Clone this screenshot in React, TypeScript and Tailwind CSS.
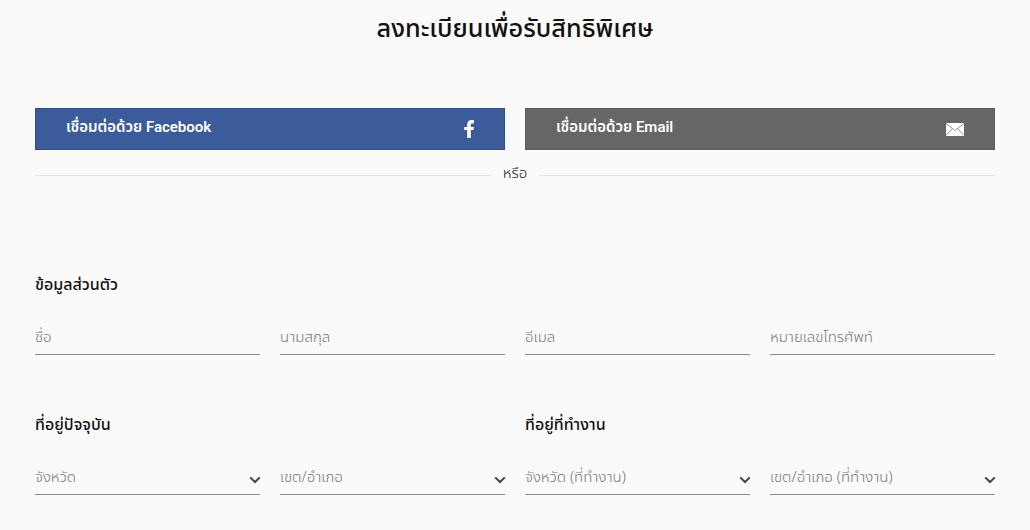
const FONT = "font-['Roboto','Noto_Sans_Thai','Noto_Sans','Liberation_Sans',sans-serif]"
const THAI = "font-['Noto_Sans_Thai','Noto_Sans','Liberation_Sans',sans-serif]"

function TextField({ label }: { label: string }) {
  return (
    <div className={`flex h-[35px] items-center border-b border-[#8a8a8a] pt-[3px] pb-[1px] text-[15px] font-light text-[#777777] ${THAI}`}>
      {label}
    </div>
  )
}

function Chevron() {
  return (
    <svg width="12" height="8" viewBox="0 0 12 8" className="mt-[3px] mr-[-1px]">
      <path d="M1.200 1.400 L6 6 L10.800 1.400" fill="none" stroke="#444444" strokeWidth="2" />
    </svg>
  )
}

function SelectField({ label }: { label: string }) {
  return (
    <div className={`flex h-[35px] items-center justify-between border-b border-[#8a8a8a] pt-[3px] pb-[1px] text-[15px] font-light text-[#777777] ${THAI}`}>
      <span>{label}</span>
      <Chevron />
    </div>
  )
}

function MailIcon() {
  return (
    <svg width="18" height="13" viewBox="0 0 18 13">
      <rect width="18" height="13" fill="#ffffff" />
      <path d="M0 0.500 L9 7.500 L18 0.500 M0 12.500 L6.500 5.500 M18 12.500 L11.500 5.500" fill="none" stroke="#777777" strokeWidth="0.8" />
    </svg>
  )
}

function FacebookIcon() {
  return (
    <svg width="10" height="18" viewBox="0 0 10 18">
      <path d="M6.800 18V10h2.700l.4-3.100H6.800V5c0-.9.3-1.500 1.500-1.500H10V.2C9.600.2 8.500 0 7.400 0 4.900 0 3.200 1.600 3.200 4.400v2.500H.2V10h3v8z" fill="#ffffff" />
    </svg>
  )
}

export default function App() {
  return (
    <div className={`h-[530px] w-[1030px] overflow-hidden bg-[#fafafa] px-[35px] text-[#111111] ${FONT}`}>
      <h1 className={`flex h-[60px] items-center justify-center text-[25.3px] font-medium ${THAI}`}>
        ลงทะเบียนเพื่อรับสิทธิพิเศษ
      </h1>

      <div className="mt-[48px] grid grid-cols-2 gap-5">
        <div className="flex h-[42px] items-center justify-between border border-[#2f4f8a] bg-[#3b5b9b] pl-[30px] pr-[30px] text-[15px] font-semibold text-white">
          <span className="mb-[4px]">เชื่อมต่อด้วย Facebook</span>
          <FacebookIcon />
        </div>
        <div className="flex h-[42px] items-center justify-between border border-[#5a5a5a] bg-[#666666] pl-[30px] pr-[30px] text-[15px] font-semibold text-white">
          <span className="mb-[4px]">เชื่อมต่อด้วย Email</span>
          <span className="mt-[1px]"><MailIcon /></span>
        </div>
      </div>

      <div className={`mt-[14px] flex h-[20px] items-center gap-3 text-[15px] font-light text-[#222222] ${THAI}`}>
        <div className="mt-[3px] h-px flex-1 bg-[#e2e2e2]" />
        <span>หรือ</span>
        <div className="mt-[3px] h-px flex-1 bg-[#e2e2e2]" />
      </div>

      <h2 className={`mt-[89px] h-[24px] text-[16px] font-medium leading-[24px] ${THAI}`}>ข้อมูลส่วนตัว</h2>

      <div className="mt-[23px] grid grid-cols-4 gap-5">
        <TextField label="ชื่อ" />
        <TextField label="นามสกุล" />
        <TextField label="อีเมล" />
        <TextField label="หมายเลขโทรศัพท์" />
      </div>

      <div className={`mt-[58px] grid grid-cols-2 gap-5 ${THAI}`}>
        <h2 className="h-[24px] text-[16px] font-medium leading-[24px]">ที่อยู่ปัจจุบัน</h2>
        <h2 className="h-[24px] text-[16px] font-medium leading-[24px]">ที่อยู่ที่ทำงาน</h2>
      </div>

      <div className="mt-[23px] grid grid-cols-4 gap-5">
        <SelectField label="จังหวัด" />
        <SelectField label="เขต/อำเภอ" />
        <SelectField label="จังหวัด (ที่ทำงาน)" />
        <SelectField label="เขต/อำเภอ (ที่ทำงาน)" />
      </div>
    </div>
  )
}
